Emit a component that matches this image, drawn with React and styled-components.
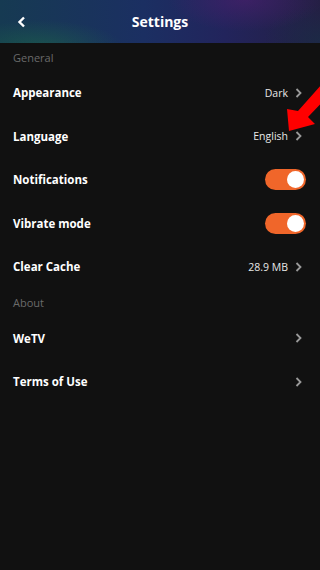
import React from 'react';
import styled, { createGlobalStyle } from 'styled-components';

const Global = createGlobalStyle`
  html, body { margin: 0; padding: 0; background: #111111; }
  body { font-family: "Open Sans", "Noto Sans", sans-serif; }
`;

const Page = styled.div`
  position: relative;
  width: 320px;
  height: 570px;
  background: #111111;
  overflow: hidden;
`;

const Header = styled.div`
  height: 43px;
  display: grid;
  grid-template-columns: 44px 1fr 44px;
  align-items: center;
  background:
    radial-gradient(ellipse 120px 40px at 40px 48px, rgba(30, 110, 70, 0.5), transparent 70%),
    radial-gradient(ellipse 110px 45px at 245px 0px, rgba(85, 30, 115, 0.5), transparent 70%),
    radial-gradient(ellipse 80px 50px at 320px 40px, rgba(25, 45, 70, 0.7), transparent 70%),
    linear-gradient(90deg, #163a52 0%, #1b2f62 45%, #22245c 70%, #241f44 100%);
`;

const Back = styled.div`
  display: flex;
  justify-content: center;
`;

const Title = styled.div`
  text-align: center;
  color: #fff;
  font-size: 14px;
  font-weight: 700;
`;

const Section = styled.div`
  height: 28px;
  padding: 0 13px;
  display: flex;
  align-items: center;
  color: #6a6a6a;
  font-size: 11px;
`;

const Row = styled.div`
  height: 43.5px;
  padding: 0 18px 0 13px;
  display: flex;
  align-items: center;
  justify-content: space-between;
`;

const Label = styled.span`
  color: #fff;
  font-size: 11.5px;
  font-weight: 700;
`;

const Right = styled.div`
  display: flex;
  align-items: center;
  gap: 7px;
`;

const Value = styled.span`
  color: #e8e8e8;
  font-size: 10.5px;
`;

const Toggle = styled.div`
  width: 41px;
  height: 21px;
  border-radius: 11px;
  background: #f0662a;
  display: flex;
  align-items: center;
  justify-content: flex-end;
  padding: 0 2px;
  box-sizing: border-box;
  margin-right: -4px;
`;

const Knob = styled.div`
  width: 17px;
  height: 17px;
  border-radius: 50%;
  background: #fff;
`;

const Arrow = styled.svg`
  position: absolute;
  left: 284px;
  top: 84px;
  overflow: visible;
`;

const Chevron = () => (
  <svg width="7" height="10" viewBox="0 0 7 10">
    <path d="M1.5 1 L5.5 5 L1.5 9" fill="none" stroke="#9a9a9a" strokeWidth="1.8" />
  </svg>
);

const rows = [
  { type: 'section', label: 'General' },
  { label: 'Appearance', value: 'Dark' },
  { label: 'Language', value: 'English' },
  { label: 'Notifications', toggle: true },
  { label: 'Vibrate mode', toggle: true },
  { label: 'Clear Cache', value: '28.9 MB' },
  { type: 'section', label: 'About' },
  { label: 'WeTV' },
  { label: 'Terms of Use' },
];

export default function App() {
  return (
    <Page>
      <Global />
      <Header>
        <Back>
          <svg width="10" height="12" viewBox="0 0 10 12">
            <path d="M7 1.5 L2.5 6 L7 10.5" fill="none" stroke="#fff" strokeWidth="2.4" />
          </svg>
        </Back>
        <Title>Settings</Title>
        <div />
      </Header>
      {rows.map((r) =>
        r.type === 'section' ? (
          <Section key={r.label}>{r.label}</Section>
        ) : (
          <Row key={r.label}>
            <Label>{r.label}</Label>
            <Right>
              {r.value && <Value>{r.value}</Value>}
              {r.toggle ? (
                <Toggle>
                  <Knob />
                </Toggle>
              ) : (
                <Chevron />
              )}
            </Right>
          </Row>
        )
      )}
      <Arrow width="40" height="50" viewBox="0 0 40 50">
        <polygon points="5,47 3,25 14,27 38,0 48,8 24,33 31,40" fill="#ff0000" />
      </Arrow>
    </Page>
  );
}
